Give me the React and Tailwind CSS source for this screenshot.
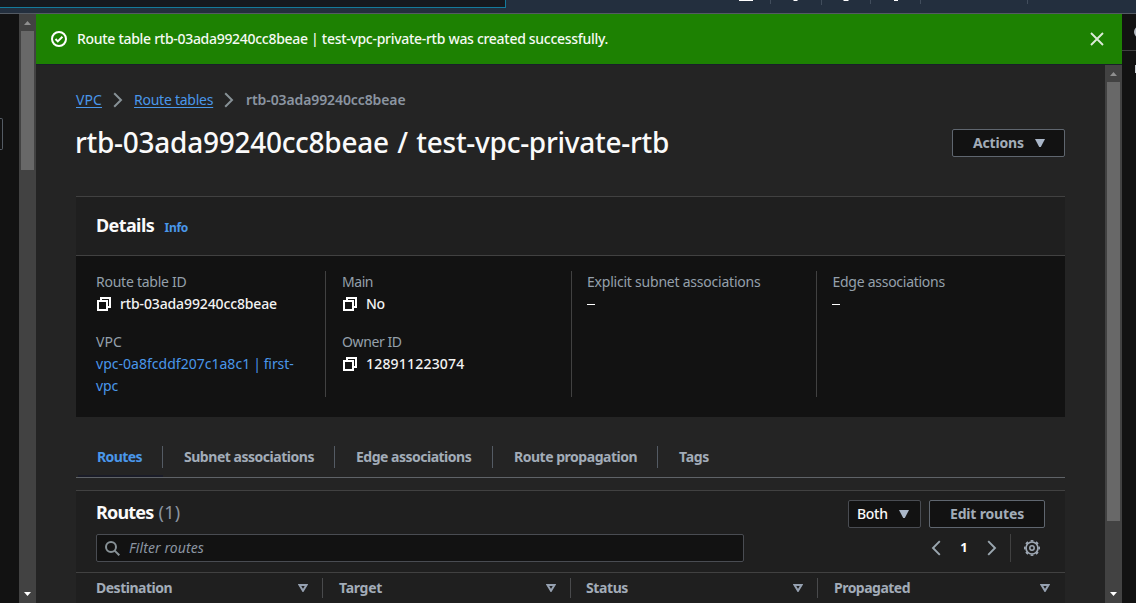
function CopyIcon() {
  return (
    <svg className="h-[14px] w-[14px] shrink-0 text-white" viewBox="0 0 14 14" fill="none" stroke="currentColor" strokeWidth="2" shapeRendering="crispEdges">
      <path d="M1 4h9v9H1z" />
      <path d="M4 4V1h9v9h-3" />
    </svg>
  );
}

function Crumb() {
  return (
    <svg className="h-[16px] w-[10px] shrink-0" viewBox="0 0 10 16" fill="none" stroke="#879196" strokeWidth="2">
      <path d="M1.2 1.2 8 8l-6.800 6.800" />
    </svg>
  );
}

function CaretDown() {
  return (
    <svg className="h-[8px] w-[10px] shrink-0" viewBox="0 0 10 8" fill="#aab7c8">
      <path d="M0 0h10L5.800 8H4.200z" />
    </svg>
  );
}

function Scrollbar({ thumb }) {
  return (
    <div className="flex w-[17px] shrink-0 flex-col items-center bg-[#424242]">
      <svg className="h-[17px] w-[17px] shrink-0" viewBox="0 0 17 17" fill="#8f8f8f">
        <path d="M5 11h7L8.500 7z" />
      </svg>
      <div className={`w-[13px] shrink-0 bg-[#686868] ${thumb}`} />
      <div className="flex-1" />
      <svg className="h-[17px] w-[17px] shrink-0" viewBox="0 0 17 17" fill="#ffffff">
        <path d="M5 6h7l-3.500 4z" />
      </svg>
    </div>
  );
}

function Field({ label, labelClass, children }) {
  return (
    <div>
      <div className={`leading-[22px] text-[#95a0ab] ${labelClass}`}>{label}</div>
      <div className="flex items-center leading-[22px] text-[#f2f3f3]">{children}</div>
    </div>
  );
}

function Dash() {
  return <span className="mt-[11px] h-px w-[8px] bg-white" />;
}

function Tab({ label, width, tracking, active, last }) {
  return (
    <div className={`flex h-full shrink-0 flex-col ${width}`}>
      <div className={`flex h-[22px] items-center pl-[21px] leading-[22px] ${last ? "" : "border-r border-[#545b64]"}`}>
        <span className={`font-bold ${active ? "text-[#4a97ea]" : "text-[#a2acb8]"} ${tracking}`}>{label}</span>
      </div>
      {active && <div className="mt-[7px] ml-[2px] h-[2px] bg-[#1a1c28]" />}
    </div>
  );
}

function HeaderCell({ label, width, tracking, pad, caretPad, last }) {
  return (
    <div className={`flex h-[20px] items-center justify-between ${width} ${pad} ${caretPad} ${last ? "" : "border-r border-[#494a4c]"}`}>
      <span className={`pb-[2px] font-bold text-[#a2acb8] ${tracking}`}>{label}</span>
      <svg className="h-[8px] w-[10px] shrink-0" viewBox="0 0 10 8" fill="none" stroke="#95a0b0" strokeWidth="2">
        <path d="M1.500 1h7L5 6.800z" />
      </svg>
    </div>
  );
}

export default function App() {
  return (
    <div className="flex h-[603px] w-[1136px] flex-col overflow-hidden bg-[#242424] font-['Noto_Sans','Open_Sans',sans-serif] text-[14px] whitespace-nowrap">
      <header className="flex h-[14px] shrink-0 items-start border-b border-[#545b64] bg-[#232f3e]">
        <div className="h-[8px] w-[506px] border-r border-b border-[#147a9c] bg-[#16191f]" />
        <svg className="h-[13px] w-[630px]" viewBox="506 0 630 13">
          <path fill="#fff" d="M739 0h14v1h-14zM793.500 0h4v1h-4zM843.500 0h5v1h-5zM894 0h4v1h-4z" />
          <path fill="#414d5c" d="M770 0h1v4h-1zM821 0h1v5h-1zM870 0h1v4h-1zM920 0h1v4h-1zM1027 0h1v4h-1z" />
        </svg>
      </header>
      <div className="flex min-h-0 flex-1">
        <aside className="flex w-[36px] shrink-0 bg-[#121212]">
          <div className="w-[19px] pt-[104px]">
            <div className="h-[32px] w-[3px] rounded-r-[2px] border-y border-r border-[#545b64]" />
          </div>
          <Scrollbar thumb="h-[139px]" />
        </aside>

        <main className="flex w-[1086px] shrink-0 flex-col">
          <div className="flex h-[51px] shrink-0 items-center border-b border-[#1a2029] bg-[#1d8102] pr-[18px] pl-[15px] text-[#f5faf3]">
            <svg className="h-[16px] w-[16px]" viewBox="0 0 16 16" fill="none" stroke="#fff" strokeWidth="2">
              <circle cx="8" cy="8" r="7" />
              <path d="m4.500 8 2.300 2.400 4.600-4.700" />
            </svg>
            <span className="ml-[10px] pb-[2px] font-medium tracking-[-0.295px]">
              Route table rtb-03ada99240cc8beae | test-vpc-private-rtb was created successfully.
            </span>
            <svg className="ml-auto h-[14px] w-[14px]" viewBox="0 0 14 14" stroke="#dcebd7" strokeWidth="1.900">
              <path d="m1 1 12 12M13 1 1 13" />
            </svg>
          </div>

          <div className="flex min-h-0 flex-1">
            <div className="flex w-[1069px] flex-col overflow-hidden pr-[40px] pl-[40px]">
              <nav className="mt-[24px] flex h-[22px] shrink-0 items-center leading-[22px]">
                <a className="tracking-[0.1px] text-[#4a97ea] underline underline-offset-2">VPC</a>
                <span className="mr-[11px] ml-[11px] flex"><Crumb /></span>
                <a className="w-[80px] tracking-[-0.25px] text-[#4a97ea] underline underline-offset-2">Route tables</a>
                <span className="mr-[12px] ml-[10px] flex"><Crumb /></span>
                <span className="font-semibold tracking-[-0.1px] text-[#8b95a1]">rtb-03ada99240cc8beae</span>
              </nav>

              <div className="mt-[13px] flex h-[36px] shrink-0 items-center justify-between">
                <h1 className="-ml-px text-[28px] leading-[36px] font-medium tracking-[-0.27px] [word-spacing:1.5px] text-[#fafafa]">
                  rtb-03ada99240cc8beae / test-vpc-private-rtb
                </h1>
                <button className="mt-[2px] flex h-[28px] w-[113px] items-center rounded-[2px] border border-[#5f666f] bg-[#121212] pl-[20px] font-bold tracking-[-0.16px] text-[#a2acb8]">
                  <span className="w-[62px] pb-[2px] text-left">Actions</span>
                  <CaretDown />
                </button>
              </div>

              <section className="mt-[36px] h-[221px] shrink-0 border-t border-[#414141] bg-[#121212]">
                <div className="flex h-[59px] items-baseline border-b border-[#414141] bg-[#1f1f1f] pt-[16px] pl-[20px]">
                  <h2 className="w-[68px] text-[18px] leading-[24px] font-bold tracking-[-0.6px] text-[#fafafa]">Details</h2>
                  <a className="ml-[0.5px] text-[12px] font-bold tracking-[-0.27px] text-[#4a97ea]">Info</a>
                </div>
                <div className="mt-[15px] flex h-[126px]">
                  <div className="flex w-[250px] flex-col gap-[16px] border-r border-[#414141] pl-[20px]">
                    <Field label="Route table ID" labelClass="tracking-[-0.25px]">
                      <span className="ml-px flex"><CopyIcon /></span>
                      <span className="ml-[9px] font-medium tracking-[-0.13px]">rtb-03ada99240cc8beae</span>
                    </Field>
                    <Field label="VPC" labelClass="tracking-[0.1px]">
                      <a className="w-[200px] tracking-[-0.1px] whitespace-normal text-[#4a97ea]">
                        <span className="tracking-[0.02px]">vpc-0a8fcddf207c1a8c1</span>
                        <span className="tracking-[-0.5px]"> | </span>first-<br />vpc
                      </a>
                    </Field>
                  </div>
                  <div className="flex w-[246px] flex-col gap-[16px] border-r border-[#414141] pl-[16px]">
                    <Field label="Main" labelClass="tracking-[-0.45px]">
                      <span className="ml-px flex"><CopyIcon /></span>
                      <span className="ml-[9px] font-medium tracking-[-0.4px]">No</span>
                    </Field>
                    <Field label="Owner ID" labelClass="tracking-[-0.4px]">
                      <span className="ml-px flex"><CopyIcon /></span>
                      <span className="ml-[9px] font-medium tracking-[0.2px]">128911223074</span>
                    </Field>
                  </div>
                  <div className="w-[245px] border-r border-[#414141] pl-[15px]">
                    <Field label="Explicit subnet associations" labelClass="tracking-[-0.22px]"><Dash /></Field>
                  </div>
                  <div className="pl-[15px]">
                    <Field label="Edge associations" labelClass="pl-[0.5px] tracking-[-0.27px]"><Dash /></Field>
                  </div>
                </div>
              </section>

              <div className="mt-[29px] flex h-[32px] shrink-0 border-b border-[#5f6368]">
                <Tab label="Routes" width="w-[87px]" tracking="tracking-[-0.6px]" active />
                <Tab label="Subnet associations" width="w-[172px]" tracking="tracking-[-0.47px]" />
                <Tab label="Edge associations" width="w-[158px]" tracking="tracking-[-0.5px]" />
                <Tab label="Route propagation" width="w-[165px]" tracking="tracking-[-0.48px]" />
                <Tab label="Tags" width="w-[80px]" tracking="tracking-[-0.3px]" last />
              </div>

              <section className="mt-[12px] h-[113px] shrink-0 border-t border-[#414141] bg-[#1f1f1f]">
                <div className="flex h-[37px] items-end pr-[20px] pl-[20px]">
                  <h2 className="mb-[4px] text-[18px] leading-[24px] font-bold tracking-[-0.8px] text-[#fafafa]">
                    Routes <span className="ml-[1px] font-normal tracking-[0.3px] text-[#8b95a1]">(1)</span>
                  </h2>
                  <button className="ml-auto flex h-[28px] w-[73px] items-center rounded-[2px] border border-[#494c52] bg-[#121212] pl-[8px] font-medium tracking-[-0.3px] text-[#fafafa]">
                    <span className="w-[42px] pb-[2px] text-left">Both</span>
                    <CaretDown />
                  </button>
                  <button className="ml-[8px] h-[28px] w-[116px] rounded-[2px] border border-[#5f666f] bg-[#121212] pb-[2px] font-bold tracking-[-0.17px] text-[#a2acb8]">
                    Edit routes
                  </button>
                </div>
                <div className="mt-[6px] flex h-[28px] items-center pl-[20px]">
                  <div className="flex h-[28px] w-[648px] items-center rounded-[2px] border border-[#494c52] bg-[#121212] pl-[8px]">
                    <svg className="h-[15px] w-[15px]" viewBox="0 0 15 15" fill="none" stroke="#879196" strokeWidth="2">
                      <circle cx="6" cy="6" r="5" />
                      <path d="m9.600 9.600 4.700 4.700" />
                    </svg>
                    <span className="ml-[9px] pb-[2px] tracking-[0.1px] text-[#8b95a1] italic">Filter routes</span>
                  </div>
                  <svg className="ml-[187px] h-[16px] w-[10px]" viewBox="0 0 10 16" fill="none" stroke="#9ba7b0" strokeWidth="1.900">
                    <path d="M8.800 1.200 2 8l6.800 6.800" />
                  </svg>
                  <span className="w-[46px] text-center text-[13px] font-bold text-white">1</span>
                  <svg className="h-[16px] w-[10px]" viewBox="0 0 10 16" fill="none" stroke="#9ba7b0" strokeWidth="1.900">
                    <path d="M1.200 1.200 8 8l-6.800 6.800" />
                  </svg>
                  <span className="ml-[13px] h-[28px] w-px bg-[#414141]" />
                  <svg className="ml-[13px] h-[16px] w-[16px]" viewBox="0 0 16 16" fill="none" stroke="#9fa9b5">
                    <circle cx="8" cy="8" r="2.200" strokeWidth="1.500" />
                    <circle cx="8" cy="8" r="6" strokeWidth="1.700" />
                    <circle cx="8" cy="8" r="7.200" strokeWidth="1.600" pathLength="80" strokeDasharray="5 5" strokeDashoffset="2.500" />
                  </svg>
                </div>
                <div className="mt-[10px] flex border-t border-[#414141] pt-[5px]">
                  <HeaderCell label="Destination" width="w-[247px]" tracking="tracking-[-0.5px]" pad="pl-[20px]" caretPad="pr-[14px]" />
                  <HeaderCell label="Target" width="w-[248px]" tracking="tracking-[-0.28px]" pad="pl-[16px]" caretPad="pr-[14px]" />
                  <HeaderCell label="Status" width="w-[247px]" tracking="tracking-[-0.4px]" pad="pl-[15px]" caretPad="pr-[14px]" />
                  <HeaderCell label="Propagated" width="w-[247px]" tracking="tracking-[-0.52px]" pad="pl-[16px]" caretPad="pr-[15px]" last />
                </div>
              </section>
            </div>
            <Scrollbar thumb="h-[439px]" />
          </div>
        </main>

        <aside className="flex w-[14px] shrink-0 flex-col overflow-hidden bg-[#121212]">
          <div className="flex h-[37px] items-center border-b border-[#414141] pl-[12px]">
            <span className="h-[12px] w-[12px] shrink-0 rounded-full border-2 border-[#b4bac2]" />
          </div>
          <div className="pt-[14px] pl-[13px]">
            <span className="block h-[8px] w-[4px] bg-[#c8cdd2]" />
          </div>
        </aside>
      </div>
    </div>
  );
}
